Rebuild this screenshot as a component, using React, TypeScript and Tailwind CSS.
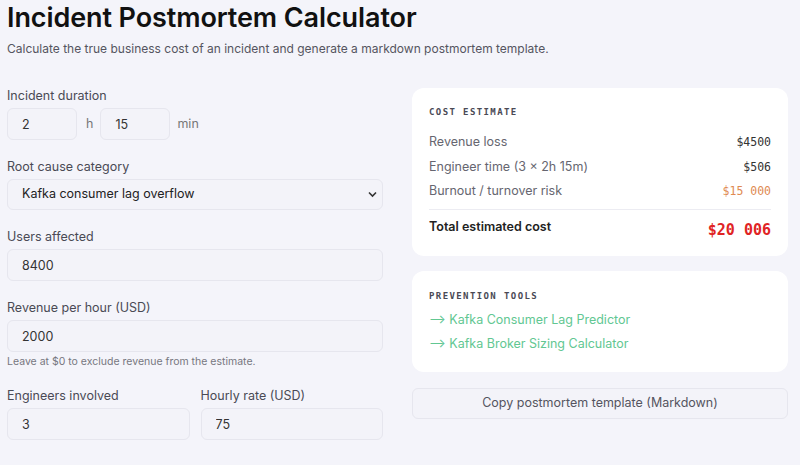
import React from 'react';

const sans = { fontFamily: 'Inter, "Noto Sans", sans-serif' };
const mono = { fontFamily: '"DejaVu Sans Mono", monospace' };

const inputCls =
  'h-[32px] rounded-md border border-[#e6e6ee] bg-[#f3f3f9] px-[14px] text-[12.5px] text-[#333] outline-none';

const Field: React.FC<{ label: string; children: React.ReactNode; className?: string }> = ({
  label,
  children,
  className = '',
}) => (
  <div className={`flex flex-col ${className}`}>
    <label className="mb-[4px] text-[12.5px] leading-[16px] text-[#4a4a55]">{label}</label>
    {children}
  </div>
);

const CostRow: React.FC<{ label: string; value: string; valueCls?: string }> = ({
  label,
  value,
  valueCls = 'text-[#333]',
}) => (
  <div className="flex h-[24.5px] items-center justify-between">
    <span className="text-[12.5px] text-[#666670]">{label}</span>
    <span className={`text-[11.5px] ${valueCls}`} style={mono}>
      {value}
    </span>
  </div>
);

export default function App() {
  return (
    <div className="min-h-[465px] bg-[#f4f4fa] px-[7px] pt-[3px] text-[#222]" style={sans}>
      <h1 className="text-[27px] font-semibold leading-[30px] tracking-[-0.1px] text-[#111]">
        Incident Postmortem Calculator
      </h1>
      <p className="mt-[8px] text-[12px] leading-[16px] text-[#555560]">
        Calculate the true business cost of an incident and generate a markdown postmortem template.
      </p>

      <div className="mt-[31px] grid grid-cols-[376px_376px] gap-[29px]">
        {/* Left column: inputs */}
        <div className="flex flex-col">
          <Field label="Incident duration">
            <div className="flex items-center">
              <input className={`${inputCls} w-[70px]`} defaultValue="2" />
              <span className="ml-[9px] mr-[7px] text-[12.5px] text-[#777]">h</span>
              <input className={`${inputCls} w-[70px]`} defaultValue="15" />
              <span className="ml-[7px] text-[12.5px] text-[#777]">min</span>
            </div>
          </Field>

          <Field label="Root cause category" className="mt-[19px]">
            <div className="relative">
              <select
                className="h-[31px] w-full appearance-none rounded-md border border-[#e6e6ee] bg-[#f3f3f9] px-[14px] text-[12.5px] text-[#222] outline-none"
                defaultValue="kafka"
              >
                <option value="kafka">Kafka consumer lag overflow</option>
              </select>
              <svg
                className="pointer-events-none absolute right-[6px] top-[12px]"
                width="9"
                height="7"
                viewBox="0 0 9 7"
              >
                <path d="M1 1.5 L4.5 5 L8 1.5" fill="none" stroke="#333" strokeWidth="1.6" />
              </svg>
            </div>
          </Field>

          <Field label="Users affected" className="mt-[19px]">
            <input className={`${inputCls} w-full`} defaultValue="8400" />
          </Field>

          <Field label="Revenue per hour (USD)" className="mt-[19px]">
            <input className={`${inputCls} w-full`} defaultValue="2000" />
          </Field>
          <p className="mt-[3px] text-[10.5px] leading-[14px] text-[#777780]">
            Leave at $0 to exclude revenue from the estimate.
          </p>

          <div className="mt-[19px] grid grid-cols-2 gap-[11px]">
            <Field label="Engineers involved">
              <input className={`${inputCls} w-full`} defaultValue="3" />
            </Field>
            <Field label="Hourly rate (USD)">
              <input className={`${inputCls} w-full`} defaultValue="75" />
            </Field>
          </div>
        </div>

        {/* Right column: results */}
        <div className="flex flex-col">
          <div className="rounded-xl bg-white px-[17px] pb-[14px] pt-[18px]">
            <div className="text-[9px] font-bold tracking-[1.4px] text-[#4a4a55]" style={mono}>
              COST ESTIMATE
            </div>
            <div className="mt-[11px]">
              <CostRow label="Revenue loss" value="$4500" />
              <CostRow label="Engineer time (3 × 2h 15m)" value="$506" />
              <CostRow label="Burnout / turnover risk" value="$15 000" valueCls="text-[#e08a52]" />
            </div>
            <div className="mt-[5px] border-t border-[#ececf2] pt-[8px]">
              <div className="flex items-start justify-between">
                <span className="text-[12.5px] font-semibold text-[#222]">Total estimated cost</span>
                <span className="mt-[1px] text-[15px] font-bold text-[#e02424]" style={mono}>
                  $20 006
                </span>
              </div>
            </div>
          </div>

          <div className="mt-[15px] rounded-xl bg-white px-[17px] pb-[20px] pt-[19px]">
            <div className="text-[9px] font-bold tracking-[1.4px] text-[#4a4a55]" style={mono}>
              PREVENTION TOOLS
            </div>
            <div className="mt-[9px] flex flex-col gap-[8px] text-[12.5px] text-[#62c792]">
              <a className="leading-[16px]">⟶ Kafka Consumer Lag Predictor</a>
              <a className="leading-[16px]">⟶ Kafka Broker Sizing Calculator</a>
            </div>
          </div>

          <button className="mt-[16px] h-[31px] rounded-md border border-[#e6e6ee] bg-[#f3f3f9] text-[12.5px] text-[#555560]">
            Copy postmortem template (Markdown)
          </button>
        </div>
      </div>
    </div>
  );
}
